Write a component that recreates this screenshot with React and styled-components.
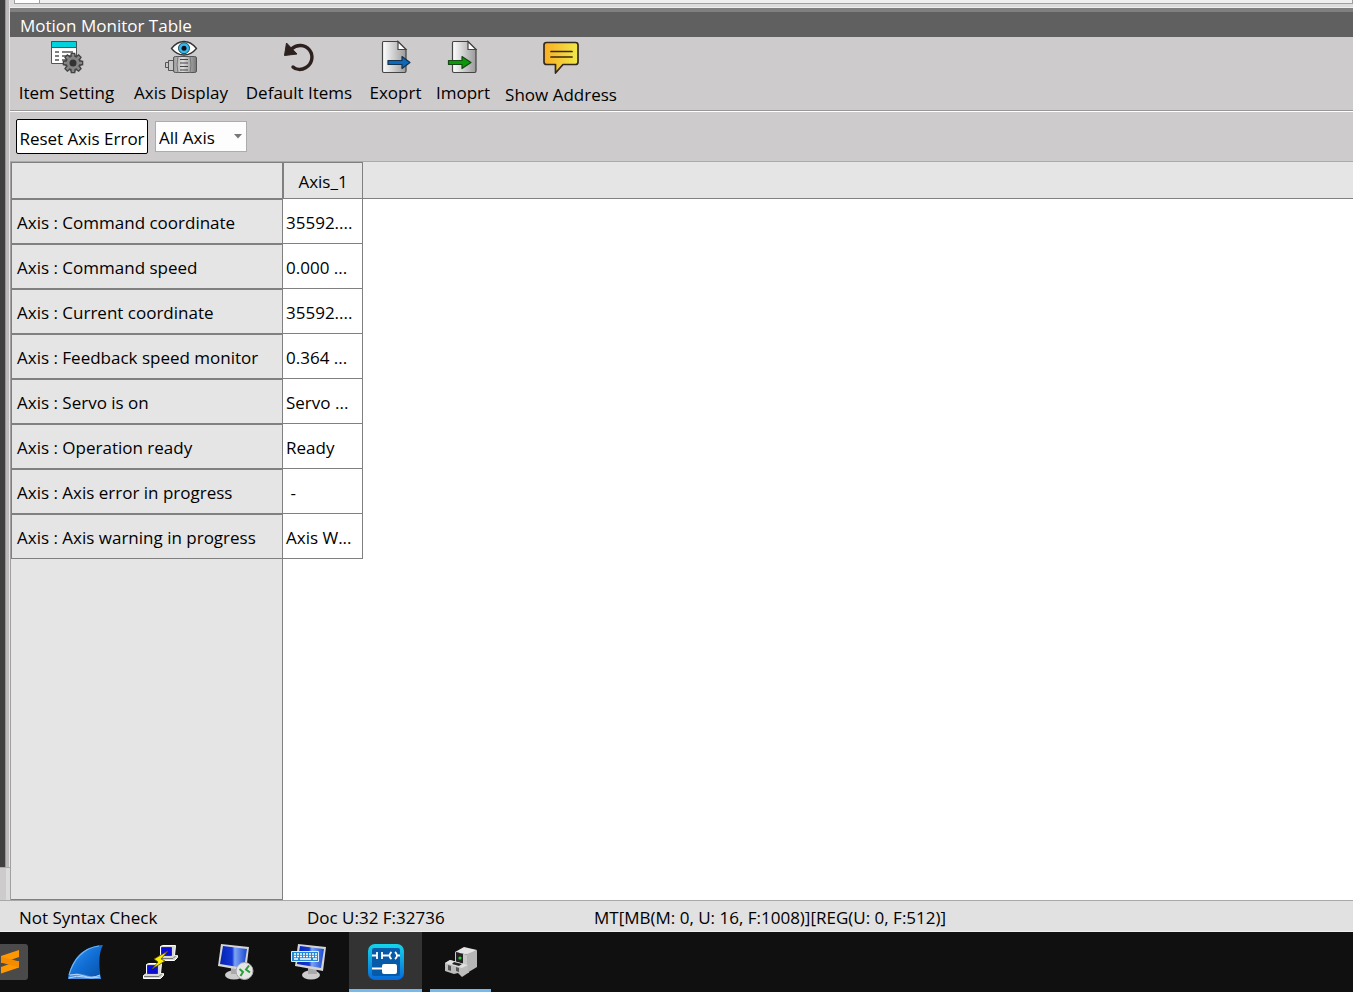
import React from 'react';
import styled, { createGlobalStyle } from 'styled-components';

const Global = createGlobalStyle`
  * { box-sizing: border-box; }
  body { margin: 0; background: #cdcbcc; }
  body, button, select { font-family: "Open Sans", "Noto Sans", sans-serif; font-size: 17px; color: #000; }
`;

const Screen = styled.div`
  min-height: 100vh;
  display: flex;
  flex-direction: column;
  overflow: hidden;
`;
const Workspace = styled.div`
  flex: 1;
  display: flex;
  min-height: 0;
`;
const Gutter = styled.div`
  width: 10px;
  flex: none;
  display: flex;
  flex-direction: column;
  background: linear-gradient(90deg, #cdcbcc 6px, #dcdcdc 6px);
`;
const GutterEdge = styled.div`
  flex: 1;
  border-bottom: 1px solid #aaa;
  background: linear-gradient(90deg, #404040 5px, #979797 5px, #979797 6px, #bdbbbc 6px, #bdbbbc 9px, #e6e6e6 9px);
`;
const GutterFoot = styled.div`
  height: 32px;
`;
const Panel = styled.main`
  flex: 1;
  min-width: 0;
  display: flex;
  flex-direction: column;
`;
const UpperEdge = styled.div`
  height: 8px;
  display: flex;
  padding-left: 4px;
  background: #dedcdd;
  border-bottom: 1px solid #eee;
`;
const UpperTab = styled.div`
  width: ${(p) => (p.$wide ? 'auto' : '26px')};
  flex: ${(p) => (p.$wide ? 1 : 'none')};
  height: 4px;
  background: ${(p) => (p.$wide ? '#f0f0f0' : '#fff')};
  border: 1px solid #a0a0a0;
  border-top: 0;
  border-left-width: ${(p) => (p.$wide ? 0 : 1)}px;
`;
const TitleBar = styled.h1`
  margin: 0;
  height: 29px;
  padding: 4px 10px 0;
  border-top: 4px solid #808080;
  background: #606060;
  color: #fff;
  font-size: 17px;
  font-weight: 400;
  line-height: 20px;
`;
const Toolbar = styled.div`
  height: 74px;
  display: flex;
  align-items: flex-start;
  padding: 2px 4px 0;
  border-bottom: 1px solid #999;
`;
const Tool = styled.button`
  width: ${(p) => p.$width}px;
  padding: 0;
  border: 0;
  background: none;
  display: flex;
  flex-direction: column;
  align-items: center;
  gap: ${(p) => (p.$tall ? 4 : 2)}px;
  line-height: 32px;
  white-space: nowrap;
  svg { display: block; width: 36px; height: 36px; }
`;
const FilterBar = styled.div`
  height: 51px;
  display: flex;
  gap: 7px;
  padding: 7px 6px 0;
  border-top: 1px solid #fff;
  border-bottom: 1px solid #aaa;
`;
const ResetButton = styled.button`
  width: 132px;
  height: 35px;
  padding: 3px 0 0;
  border: 1px solid #000;
  border-radius: 2px;
  background: #fff;
  white-space: nowrap;
`;
const SelectWrap = styled.label`
  position: relative;
  height: 31px;
  margin-top: 2px;
  svg { position: absolute; right: 5px; top: 13px; width: 8px; height: 5px; pointer-events: none; }
`;
const AxisSelect = styled.select`
  appearance: none;
  width: 92px;
  height: 31px;
  padding: 1px 3px 0;
  border: 1px solid #acacac;
  border-radius: 0;
  background: #fdfdfd;
`;
const GridArea = styled.section`
  flex: 1;
  display: flex;
  flex-direction: column;
  background: #fff;
  border-left: 1px solid #a0a0a0;
`;
const HeaderBand = styled.div`
  background: linear-gradient(#e5e5e5 36px, #808080 36px, #808080 37px, transparent 37px);
`;
const RowHeadFill = styled.div`
  flex: 1;
  width: 272px;
  background: #e5e5e5;
  border-right: 1px solid #808080;
  border-bottom: 1px solid #808080;
`;
const MonitorTable = styled.table`
  width: 352px;
  table-layout: fixed;
  border-collapse: separate;
  border-spacing: 0;
  border-top: 1px solid #808080;
`;
const ColHead = styled.th`
  width: ${(p) => p.$width}px;
  height: 36px;
  padding: 2px 0 0;
  font-weight: 400;
  background: #e5e5e5;
  border: 1px solid #808080;
  border-top: 0;
  line-height: 24px;
`;
const RowHead = styled.th`
  height: 45px;
  padding: 3px 5px 0;
  text-align: left;
  font-weight: 400;
  white-space: nowrap;
  background: #e5e5e5;
  border: 1px solid #808080;
  line-height: 24px;
`;
const Value = styled.td`
  height: 45px;
  padding: 3px 3px 0;
  white-space: pre;
  background: #fff;
  border: 1px solid #808080;
  border-width: 0 1px 1px 0;
  line-height: 24px;
`;
const StatusBar = styled.footer`
  height: 32px;
  flex: none;
  display: grid;
  grid-template-columns: 288px 287px 1fr;
  padding-left: 19px;
  background: #e1e1e1;
  border-top: 1px solid #a8a8a8;
  border-bottom: 1px solid #eee;
  line-height: 33px;
`;
const Taskbar = styled.nav`
  height: 60px;
  flex: none;
  display: flex;
  background: #101010;
`;
const Task = styled.button`
  width: ${(p) => p.$width}px;
  height: 60px;
  flex: none;
  padding: 2px 0 0;
  border: 0;
  border-bottom: 3px solid ${(p) => (p.$open ? '#76b9ed' : 'transparent')};
  margin-right: ${(p) => p.$gap || 0}px;
  background: ${(p) => (p.$active ? '#333' : 'transparent')};
  display: flex;
  align-items: center;
  justify-content: center;
  svg { display: block; flex: none; }
`;

const Svg = ({ size = 36, children }) => (
  <svg width={size} height={size} viewBox={`0 0 ${size} ${size}`} aria-hidden="true">{children}</svg>
);

const gearTeeth = Array.from({ length: 8 }, (_, i) => i * 45);

const ItemSettingIcon = () => (
  <Svg>
    <path d="M2.500 2.500h25v22h-25z" fill="#fff" stroke="#555" />
    <path d="M2.500 2.500h25v6h-25z" fill="#00d2dc" stroke="#3c5558" />
    <path d="M6 13h4M13 13h11M6 17h4M13 17h8M6 21h4M13 21h4" stroke="#555" strokeWidth="1.5" />
    <g fill="#858585" stroke="#444" strokeWidth="1.6">
      {gearTeeth.map((a) => <path key={a} d="M21.800 17.500l.6-3h3.200l.6 3z" transform={`rotate(${a} 24 24)`} />)}
      <circle cx="24" cy="24" r="7" />
    </g>
    <g fill="#858585">
      {gearTeeth.map((a) => <path key={a} d="M22.500 19l.4-4h2.200l.4 4z" transform={`rotate(${a} 24 24)`} />)}
    </g>
    <circle cx="24" cy="24" r="3.5" fill="#333" />
  </Svg>
);

const AxisDisplayIcon = () => (
  <Svg>
    <defs><linearGradient id="motor"><stop stopColor="#999" /><stop offset=".4" stopColor="#ddd" /><stop offset="1" stopColor="#777" /></linearGradient></defs>
    <path d="M8.500 9.500Q14 2.500 21 2.500T33.500 9.500Q28 16 21 16T8.500 9.500z" fill="#fff" stroke="#333" strokeWidth="1.3" />
    <circle cx="21" cy="9.200" r="5.500" fill="#35b8ee" stroke="#174960" />
    <circle cx="21" cy="9.200" r="2.500" fill="#111" />
    <path d="M2.500 23.500h3v5h-3zM5.500 21.500h5v10h-5z" fill="#c8c8c8" stroke="#555" />
    <path d="M10.500 19q0-1.500 2-1.500h19q2 0 2 1.500v13q0 1.500-2 1.500h-19q-2 0-2-1.500z" fill="url(#motor)" stroke="#555" />
    <path d="M15 17.500q-2 8 0 16.500M27 17.500q2 8 0 16.500" fill="none" stroke="#777" />
    <path d="M17 20.500h8M17 24h8M17 27.500h8M17 31h8" stroke="#444" />
  </Svg>
);

const DefaultIcon = () => (
  <Svg>
    <path d="M10.500 10C16 5 24 5.500 28.500 11c4.500 6 2.500 14-3.500 17.500-4.500 2.800-10 2.500-13-.5" fill="none" stroke="#2c211f" strokeWidth="3.400" strokeLinecap="round" />
    <path d="M5.500 4L3.500 16.500l12.500-1.500z" fill="#2c211f" stroke="#2c211f" strokeLinejoin="round" />
  </Svg>
);

const Page = ({ id }) => (
  <>
    <defs><linearGradient id={id}><stop stopColor="#fff" /><stop offset="1" stopColor="#999" /></linearGradient></defs>
    <path d="M5.500 2.500H20l8 8V32q0 1.500-1.500 1.500H6q-1.500 0-1.500-1.500V4q0-1.500 1-1.500z" fill={`url(#${id})`} stroke="#444" strokeWidth="1.200" />
    <path d="M20 2.500v8h8z" fill="#fff" stroke="#444" strokeWidth="1.200" />
  </>
);

const ExportIcon = () => (
  <Svg>
    <Page id="pageOut" />
    <path d="M10 21.500h14v-4l8 6-8 6v-4H10z" fill="#0869bd" stroke="#17324b" strokeWidth="1.200" strokeLinejoin="round" />
  </Svg>
);
const ImportIcon = () => (
  <Svg>
    <g transform="translate(3 0)"><Page id="pageIn" /></g>
    <path d="M3.500 21.500H17v-4l9 6-9 6v-4H3.500z" fill="#099909" stroke="#174917" strokeWidth="1.200" strokeLinejoin="round" />
  </Svg>
);
const AddressIcon = () => (
  <Svg>
    <defs><linearGradient id="note"><stop stopColor="#f9ae22" /><stop offset="1" stopColor="#f0e94a" /></linearGradient></defs>
    <path d="M3.500 3.500h29q2.500 0 2.500 2.500v17q0 2.500-2.500 2.500H20L12.500 34v-8.500h-9Q1 25.500 1 23V6q0-2.500 2.500-2.500z" fill="url(#note)" stroke="#35281c" strokeWidth="1.700" strokeLinejoin="round" />
    <path d="M8 12.500h21M8 18h21" stroke="#35281c" strokeWidth="1.700" strokeLinecap="round" />
  </Svg>
);

const SublimeIcon = () => (
  <svg width="28" height="36" viewBox="0 0 28 36" aria-hidden="true">
    <path d="M0 0h25q3 0 3 3v30q0 3-3 3H0z" fill="#4a4a4a" />
    <path d="M1 12L19 6v7L9 16.500 1 19z" fill="#ff9800" />
    <path d="M1 29.500V23l10-3.500 8-2.500v6.500z" fill="#ff9800" />
    <path d="M1 12.500l18 5v6L1 18.500z" fill="#f58c00" />
  </svg>
);
const SharkIcon = () => (
  <Svg>
    <defs><linearGradient id="fin" x1="0" x2="1" y1="0" y2="1"><stop stopColor="#3d9cf0" /><stop offset=".5" stopColor="#116fd6" /><stop offset="1" stopColor="#084fa5" /></linearGradient></defs>
    <path d="M1 35C4 16 15 2 36 1c-5 9-4 22-2 34z" fill="url(#fin)" />
    <path d="M2 31C6 16 16 4 32 2" fill="none" stroke="#72b7f4" strokeWidth="1.200" />
    <path d="M2 31q9-3 17 0t14 0l1 4H1z" fill="#4b8fdc" />
    <path d="M3 31q7-2 14 1t16-1M2 34q8-3 15-1t16 0" fill="none" stroke="#b8d8ff" />
  </Svg>
);
const MiniPc = () => (
  <>
    <path d="M3.500 1.500l2-1h13l-1 10h3v2l-3 3H.5v-3l3-2z" fill="#d8d8d0" stroke="#fff" />
    <path d="M4.500 2.500h10v8h-10z" fill="#0b0bd8" stroke="#333" />
    <path d="M1 13.500h15l3-3" fill="none" stroke="#777" />
  </>
);
const PuttyIcon = () => (
  <Svg>
    <g transform="translate(15 1)"><MiniPc /></g>
    <g transform="translate(1 19)"><MiniPc /></g>
    <path d="M26 7L12 15l4 3-6 7 13-8-4-2z" fill="#ffef00" stroke="#524c00" strokeWidth=".8" />
  </Svg>
);
const Monitor = ({ id }) => (
  <>
    <defs><linearGradient id={id}><stop stopColor="#0524b0" /><stop offset=".45" stopColor="#1538d8" /><stop offset=".55" stopColor="#7ea4f2" /><stop offset="1" stopColor="#1646d4" /></linearGradient></defs>
    <ellipse cx="16" cy="31" rx="9" ry="4.500" fill="#ccc" />
    <path d="M13 23h8l1 7h-9z" fill="#aaa" />
    <path d="M3 0l28 3-3 24L0 22z" fill="#d5d5d5" />
    <path d="M5 2l24 3-3 19L2 20z" fill={`url(#${id})`} />
  </>
);
const RemoteIcon = () => (
  <Svg>
    <Monitor id="screenA" />
    <circle cx="26.500" cy="27" r="8.500" fill="#e6e6e6" stroke="#aaa" />
    <path d="M21.500 25l3.500 3-2.500 4M31 21.500L28 25.500l4 3" fill="none" stroke="#2b9d38" strokeWidth="2" />
  </Svg>
);
const KeyboardIcon = () => (
  <Svg>
    <g transform="translate(4 0)"><Monitor id="screenB" /></g>
    <path d="M.5 7.500h27v10H.5z" fill="#2387d2" stroke="#d8edff" />
    <path d="M3 10h23M3 12.500h23" stroke="#fff" strokeWidth="1.500" strokeDasharray="2 1" />
    <path d="M3 15h4M9 15h11M22 15h4" stroke="#fff" strokeWidth="1.500" />
  </Svg>
);
const LadderIcon = () => (
  <Svg>
    <defs><linearGradient id="ladder" x1="0" x2="0" y1="0" y2="1"><stop stopColor="#14d5e9" /><stop offset="1" stopColor="#0869d8" /></linearGradient></defs>
    <rect width="36" height="36" rx="7" fill="url(#ladder)" />
    <rect x="4" y="4" width="28" height="28" rx="2" fill="#075aa8" />
    <path d="M4 11.500h5M9 8v7M14 8v7M14 11.500h7M28 11.500h4M4 24.500h12M23.500 8q-4 3.500 0 7M27 8q4 3.500 0 7" fill="none" stroke="#fff" strokeWidth="1.800" />
    <rect x="14" y="20" width="15" height="10" rx="2" fill="#fff" />
  </Svg>
);
const ControllerIcon = () => (
  <Svg>
    <path d="M12 8l9-5 13 3-8 5z" fill="#e4e4e4" />
    <path d="M12 8l14 3v18l-14-4z" fill="#c9c9c9" />
    <path d="M24 10l10-4v17l-10 6z" fill="#b5b5b5" />
    <path d="M13 8l7 2v13l-7-3z" fill="#222" />
    <circle cx="17" cy="14" r="1.600" fill="#2dc83e" />
    <path d="M2 19l5-3 18 5v8l-6 4-4-4-4 1-9-3z" fill="#bcbcbc" />
    <path d="M2 19l5-3 18 5-6 3z" fill="#e0e0e0" />
    <path d="M11 18l8 2-3 2-7-2z" fill="#222" />
    <path d="M5 21l3 1v5l-3-1zM13 23l3 1v4l-3-1z" fill="#555" />
  </Svg>
);

const tools = [
  { label: 'Item Setting', width: 105, Icon: ItemSettingIcon },
  { label: 'Axis Display', width: 124, Icon: AxisDisplayIcon },
  { label: 'Default Items', width: 112, Icon: DefaultIcon },
  { label: 'Exoprt', width: 81, Icon: ExportIcon },
  { label: 'Imoprt', width: 54, Icon: ImportIcon },
  { label: 'Show Address', width: 142, Icon: AddressIcon, tall: true },
];

const rows = [
  ['Command coordinate', '35592....'],
  ['Command speed', '0.000 ...'],
  ['Current coordinate', '35592....'],
  ['Feedback speed monitor', '0.364 ...'],
  ['Servo is on', 'Servo ...'],
  ['Operation ready', 'Ready'],
  ['Axis error in progress', ' -'],
  ['Axis warning in progress', 'Axis W...'],
];

const tasks = [
  { name: 'Editor', width: 28, gap: 20, Icon: SublimeIcon },
  { name: 'Network analyzer', width: 74, Icon: SharkIcon },
  { name: 'Terminal', width: 76, Icon: PuttyIcon },
  { name: 'Remote desktop', width: 75, Icon: RemoteIcon },
  { name: 'On-screen keyboard', width: 72, gap: 4, Icon: KeyboardIcon },
  { name: 'Ladder editor', width: 73, gap: 8, Icon: LadderIcon, active: true, open: true },
  { name: 'Controller', width: 61, Icon: ControllerIcon, open: true },
];

export default function App() {
  return (
    <Screen>
      <Global />
      <Workspace>
        <Gutter><GutterEdge /><GutterFoot /></Gutter>
        <Panel>
          <UpperEdge><UpperTab /><UpperTab $wide /></UpperEdge>
          <TitleBar>Motion Monitor Table</TitleBar>
          <Toolbar>
            {tools.map(({ label, width, Icon, tall }) => (
              <Tool key={label} type="button" $width={width} $tall={tall}><Icon />{label}</Tool>
            ))}
          </Toolbar>
          <FilterBar>
            <ResetButton type="button">Reset Axis Error</ResetButton>
            <SelectWrap>
              <AxisSelect aria-label="Axis" defaultValue="all"><option value="all">All Axis</option></AxisSelect>
              <svg viewBox="0 0 8 5" aria-hidden="true"><path d="M0 0h8L4 4.500z" fill="#777" /></svg>
            </SelectWrap>
          </FilterBar>
          <GridArea>
            <HeaderBand>
              <MonitorTable>
                <thead><tr><ColHead $width={272} aria-label="Item" /><ColHead $width={80} scope="col">Axis_1</ColHead></tr></thead>
                <tbody>
                  {rows.map(([name, value]) => (
                    <tr key={name}><RowHead scope="row">Axis : {name}</RowHead><Value>{value}</Value></tr>
                  ))}
                </tbody>
              </MonitorTable>
            </HeaderBand>
            <RowHeadFill />
          </GridArea>
        </Panel>
      </Workspace>
      <StatusBar><span>Not Syntax Check</span><span>Doc U:32 F:32736</span><span>MT[MB(M: 0, U: 16, F:1008)][REG(U: 0, F:512)]</span></StatusBar>
      <Taskbar aria-label="Taskbar">
        {tasks.map(({ name, width, gap, Icon, active, open }) => (
          <Task key={name} type="button" aria-label={name} $width={width} $gap={gap} $active={active} $open={open}><Icon /></Task>
        ))}
      </Taskbar>
    </Screen>
  );
}
